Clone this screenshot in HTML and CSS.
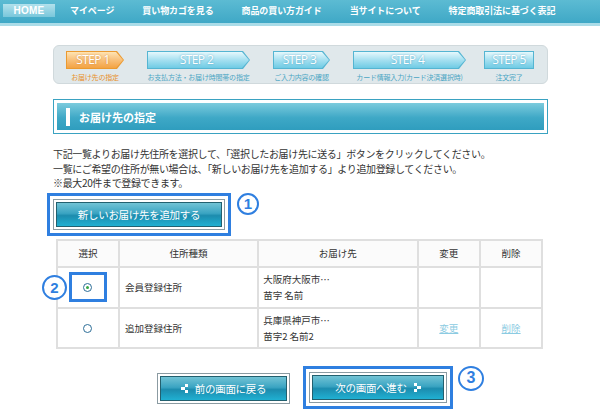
FILE: index.html
```html
<!DOCTYPE html>
<html lang="ja">
<head>
<meta charset="utf-8">
<title>お届け先の指定</title>
<link rel="stylesheet" href="styles.css">
</head>
<body>
<nav class="gnav">
  <a class="home" href="#">HOME</a>
  <a href="#">マイページ</a>
  <a href="#">買い物カゴを見る</a>
  <a href="#">商品の買い方ガイド</a>
  <a href="#">当サイトについて</a>
  <a href="#">特定商取引法に基づく表記</a>
</nav>

<main class="wrap">
  <div class="steps">
    <div class="step current s1">
      <div class="shape arrow"><div class="fill">STEP 1</div></div>
      <div class="label">お届け先の指定</div>
    </div>
    <div class="step s2">
      <div class="shape arrow"><div class="fill">STEP 2</div></div>
      <div class="label">お支払方法・お届け時間帯の指定</div>
    </div>
    <div class="step s3">
      <div class="shape arrow"><div class="fill">STEP 3</div></div>
      <div class="label">ご入力内容の確認</div>
    </div>
    <div class="step s4">
      <div class="shape arrow"><div class="fill">STEP 4</div></div>
      <div class="label">カード情報入力(カード決済選択時)</div>
    </div>
    <div class="step s5">
      <div class="shape"><div class="fill">STEP 5</div></div>
      <div class="label">注文完了</div>
    </div>
  </div>

  <h2 class="heading"><span class="band"><span class="bar"></span>お届け先の指定</span></h2>

  <p class="intro">下記一覧よりお届け先住所を選択して、「選択したお届け先に送る」ボタンをクリックしてください。<br>一覧にご希望の住所が無い場合は、「新しいお届け先を追加する」より追加登録してください。<br>※最大20件まで登録できます。</p>

  <div class="add-row">
    <div class="hl">
      <div class="btn-frame"><button class="btn add">新しいお届け先を追加する</button></div>
    </div>
    <span class="num">1</span>
  </div>

  <table class="addr">
    <thead>
      <tr>
        <th class="c-sel">選択</th>
        <th class="c-type">住所種類</th>
        <th class="c-dest">お届け先</th>
        <th class="c-edit">変更</th>
        <th class="c-del">削除</th>
      </tr>
    </thead>
    <tbody>
      <tr class="r1">
        <td class="sel">
          <span class="num num-side">2</span>
          <span class="radio-hl"><span class="radio checked"></span></span>
        </td>
        <td class="type">会員登録住所</td>
        <td class="dest">大阪府大阪市…<br>苗字 名前</td>
        <td></td>
        <td></td>
      </tr>
      <tr class="r2">
        <td class="sel"><span class="radio"></span></td>
        <td class="type">追加登録住所</td>
        <td class="dest">兵庫県神戸市…<br>苗字2 名前2</td>
        <td class="link"><a href="#">変更</a></td>
        <td class="link"><a href="#">削除</a></td>
      </tr>
    </tbody>
  </table>

  <div class="actions">
    <div class="btn-frame back-frame">
      <button class="btn back"><svg class="ico" width="8" height="9" viewBox="0 0 8 9"><rect x="4" y="0" width="3" height="3" fill="#fff"/><rect x="0" y="3" width="4" height="3" fill="#fff"/><rect x="4" y="6" width="3" height="3" fill="#fff"/></svg>前の画面に戻る</button>
    </div>
    <div class="hl next-hl">
      <div class="btn-frame"><button class="btn next">次の画面へ進む<svg class="ico" width="8" height="9" viewBox="0 0 8 9"><rect x="1" y="0" width="3" height="3" fill="#fff"/><rect x="4" y="3" width="4" height="3" fill="#fff"/><rect x="1" y="6" width="3" height="3" fill="#fff"/></svg></button></div>
    </div>
    <span class="num">3</span>
  </div>
</main>
</body>
</html>
```

FILE: styles.css
```css
* { box-sizing: border-box; }

body {
  margin: 0;
  background: #fff;
  color: #333;
  font-family: "Noto Sans CJK JP", "Noto Sans", sans-serif;
}

/* ---------- global nav ---------- */
.gnav {
  display: flex;
  align-items: center;
  gap: 28px;
  height: 26px;
  padding: 0 0 3px 3px;
  background: linear-gradient(#5cbbd3, #3fa8c6);
  border-bottom: 3px solid #aadce8;
}
.gnav a {
  color: #fff;
  font-size: 9px;
  font-weight: bold;
  text-decoration: none;
  letter-spacing: -0.1px;
}
.gnav .home {
  width: 52px;
  height: 13px;
  margin-right: -13px;
  background: linear-gradient(#b2e1ec, #79c7db);
  font-family: "Liberation Sans", sans-serif;
  font-size: 10px;
  line-height: 13px;
  text-align: center;
  letter-spacing: 0.3px;
}

/* ---------- layout ---------- */
.wrap {
  width: 495px;
  margin-left: 53px;
}

/* ---------- steps ---------- */
.steps {
  display: flex;
  margin-top: 19px;
  height: 39px;
  padding: 5px 0 0 12px;
  background: #e0e8eb;
  border: 1px solid #d0d9dc;
  border-radius: 6px;
}
.step {
  display: flex;
  flex-direction: column;
  align-items: center;
}
.s1 { width: 58px; }
.s2 { width: 103px; margin-left: 23px; }
.s3 { width: 57px; margin-left: 23px; }
.s4 { width: 113px; margin-left: 23px; }
.s5 { width: 50px; margin-left: 18px; }

.shape {
  width: 100%;
  height: 18px;
  padding: 1px;
  background: #55b5d2;
}
.shape .fill {
  height: 100%;
  background: linear-gradient(#e6f8fc, #a6e0f0 50%, #6fcbe4);
  color: #fff;
  font-family: "Open Sans", sans-serif;
  font-size: 12px;
  line-height: 16px;
  text-align: center;
  letter-spacing: -0.6px;
  text-shadow: 0 0 2px rgba(40, 140, 180, 0.7);
  padding-right: 4px;
}
.s5 .shape .fill { padding-right: 0; }
.arrow,
.arrow .fill {
  clip-path: polygon(0 0, calc(100% - 7px) 0, 100% 50%, calc(100% - 7px) 100%, 0 100%);
}
.current .shape { background: #eb9a30; }
.current .shape .fill {
  background: linear-gradient(#fee4b3, #f8c07a 50%, #f3a343);
  text-shadow: 0 0 2px rgba(200, 110, 20, 0.7);
}
.label {
  margin-top: 4px;
  font-size: 7px;
  line-height: 9px;
  white-space: nowrap;
  color: #4aa5c3;
  letter-spacing: -0.2px;
}
.current .label { color: #e8902a; }

/* ---------- heading ---------- */
.heading {
  margin: 15px 0 0;
  border: 1px solid #3aa2c1;
  padding: 3px;
  font-size: 11px;
  font-weight: bold;
}
.heading .band {
  display: flex;
  align-items: center;
  height: 27px;
  padding-left: 9px;
  background: linear-gradient(#7ccbdd, #3ea8c6 55%, #2f9dbe);
  color: #fff;
}
.heading .bar {
  width: 4px;
  height: 18px;
  background: #fff;
  margin-right: 9px;
}

/* ---------- intro ---------- */
.intro {
  margin: 13px 0 0;
  font-size: 10px;
  line-height: 14.5px;
  letter-spacing: -0.35px;
  color: #333;
}

/* ---------- buttons ---------- */
.hl {
  border: 3px solid #2f7fe0;
  padding: 3px;
}
.btn-frame {
  border: 1px solid #8b9ba2;
  padding: 2px;
  background: #fff;
}
.btn {
  display: flex;
  align-items: center;
  justify-content: center;
  gap: 6px;
  height: 25px;
  border: 1px solid #23606f;
  background: linear-gradient(#72c3d5, #3aa4c2 45%, #1c8cae 55%, #20b0d2);
  color: #fff;
  font-family: "Noto Sans CJK JP", sans-serif;
  font-size: 10.5px;
  padding: 0;
  letter-spacing: -0.3px;
}
.ico { display: block; }

.num {
  display: inline-flex;
  align-items: center;
  justify-content: center;
  width: 22px;
  height: 22px;
  border: 2px solid #2f7fe0;
  border-radius: 50%;
  color: #2f7fe0;
  background: #fff;
  font-family: "Liberation Sans", sans-serif;
  font-size: 15px;
  font-weight: bold;
  line-height: 1;
}

.add-row {
  display: flex;
  align-items: flex-start;
  gap: 6px;
  margin-top: 2px;
  margin-left: -6px;
}
.add { width: 166px; }

/* ---------- table ---------- */
.addr {
  width: 487px;
  margin: 3px 0 0 3px;
  border-collapse: collapse;
  font-size: 9.5px;
  color: #333;
}
.addr th,
.addr td {
  border: 2px solid #dfdfdf;
  padding: 0;
}
.addr th {
  height: 27px;
  font-weight: normal;
  background: #fbfbfb;
}
.c-sel { width: 62px; }
.c-type { width: 140px; }
.c-dest { width: 160px; }
.c-edit { width: 63px; }
.c-del { width: 62px; }
.r1 td { height: 41px; }
.r2 td { height: 40px; }
.sel {
  position: relative;
  text-align: center;
}
.type { padding-left: 5px !important; }
.dest {
  padding-left: 4px !important;
  line-height: 16px;
}
.link { text-align: center; }
.link a { color: #8ccbe2; }

.radio-hl {
  display: inline-flex;
  align-items: center;
  justify-content: center;
  width: 38px;
  height: 30px;
  border: 3px solid #2f7fe0;
  vertical-align: middle;
}
.radio {
  display: inline-block;
  width: 9px;
  height: 9px;
  border: 1px solid #2d6e98;
  border-radius: 50%;
  background: #fff;
  vertical-align: middle;
  position: relative;
}
.radio.checked::after {
  content: "";
  position: absolute;
  left: 2px;
  top: 2px;
  width: 3px;
  height: 3px;
  border-radius: 50%;
  background: #35a845;
}
.num-side {
  position: absolute;
  left: -16px;
  top: 7px;
  width: 25px;
  height: 25px;
}

/* ---------- actions ---------- */
.actions {
  display: flex;
  align-items: flex-start;
  gap: 5px;
  margin-top: 17px;
  padding-left: 104px;
}
.back-frame {
  margin-top: 7px;
  margin-right: 8px;
}
.back { width: 127px; }
.next { width: 132px; }
.actions .num {
  width: 26px;
  height: 25px;
  font-size: 16px;
}
```
